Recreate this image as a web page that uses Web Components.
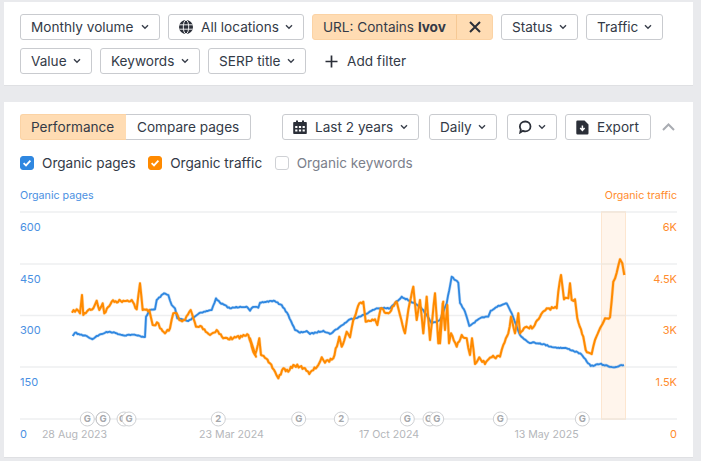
<!DOCTYPE html>
<html>
<head>
<meta charset="utf-8">
<style>
  html, body { margin: 0; padding: 0; background: #e9eaed; }
  body { font-family: Inter, "Liberation Sans", sans-serif; font-size: 13.6px; color: #333a47; width: 701px; height: 461px; overflow: hidden; }
  main { display: flex; flex-direction: column; gap: 16px; padding: 2px 8px 0 4px; }
  .row { display: flex; gap: 8px; align-items: center; }
  .tools { display: flex; align-items: center; }
  .checks { display: flex; gap: 12.5px; margin-top: 16px; }
  svg { display: block; }
</style>
</head>
<body>
<main>
  <panel-card>
    <div class="row" style="margin-bottom:8px">
      <ui-button caret style="width:140px">Monthly volume</ui-button>
      <ui-button caret style="width:136px"><svg slot="icon" width="14" height="14" viewBox="0 0 14 14"><circle cx="7" cy="7" r="7" fill="#2b2f38"/><g fill="none" stroke="#fff" stroke-width=".9"><ellipse cx="7" cy="7" rx="2.700" ry="6.800"/><path d="M.4 4.800h13.200M.4 9.200h13.200"/></g></svg>All locations</ui-button>
      <active-filter>URL: Contains <b>lvov</b></active-filter>
      <ui-button caret style="width:77px">Status</ui-button>
      <ui-button caret style="width:77px">Traffic</ui-button>
    </div>
    <div class="row">
      <ui-button caret style="width:72px">Value</ui-button>
      <ui-button caret style="width:100px">Keywords</ui-button>
      <ui-button caret style="width:98px">SERP title</ui-button>
      <ui-button plain><svg slot="icon" width="13" height="13" viewBox="0 0 13 13" stroke="#2b2f38" stroke-width="1.7"><path d="M6.500 0.500v12M0.500 6.500h12"/></svg>Add filter</ui-button>
    </div>
  </panel-card>

  <panel-card>
    <div class="tools">
      <ui-button segment="on">Performance</ui-button>
      <ui-button segment="off">Compare pages</ui-button>
      <span style="flex:0 0 31px"></span>
      <ui-button caret style="width:137px"><svg slot="icon" width="14" height="14" viewBox="0 0 14 14"><path fill="#2b2f38" d="M1 2h2V0.600h2V2h4V0.600h2V2h2a.8.8 0 0 1 .8.8v10.400a.8.8 0 0 1-.8.8H1a.8.8 0 0 1-.8-.8V2.800A.8.8 0 0 1 1 2z"/><path fill="#fff" d="M2.200 6h2.200v2H2.200zM5.900 6h2.200v2H5.900zM9.600 6h2.200v2H9.600zM2.200 9.400h2.200v2H2.200zM5.900 9.400h2.200v2H5.900zM9.600 9.400h2.200v2H9.600z"/></svg>Last 2 years</ui-button>
      <span style="flex:0 0 10px"></span>
      <ui-button caret style="width:68px">Daily</ui-button>
      <span style="flex:0 0 10px"></span>
      <ui-button caret style="width:50px"><svg slot="icon" width="14" height="14" viewBox="0 0 15 15" fill="none" stroke="#2b2f38" stroke-width="1.900"><path d="M7.800 1.600c3.200 0 5.600 2.300 5.600 5.300s-2.400 5.200-5.600 5.200c-1.100 0-1.800-.2-2.500-.5L2.400 13.400l.6-3.300C2.400 9.200 2 8.100 2 6.900c0-3 2.600-5.300 5.800-5.300z"/></svg></ui-button>
      <span style="flex:0 0 8px"></span>
      <ui-button style="width:86px"><svg slot="icon" width="13" height="15" viewBox="0 0 13 15"><path fill="#2b2f38" d="M1.500 0.500H8.500L12.500 4.500V13.300A1.200 1.200 0 0 1 11.300 14.500H1.500A1.200 1.200 0 0 1 .3 13.300V1.700A1.200 1.200 0 0 1 1.500 0.500z"/><path fill="none" stroke="#fff" stroke-width="1.500" d="M6.400 5.500V10M4.200 8 6.400 10.300 8.600 8"/></svg>Export</ui-button>
      <svg style="margin-left:11px" width="13" height="8" viewBox="0 0 13 8" fill="none" stroke="#a9acb2" stroke-width="2"><path d="M1 7 6.500 1.500 12 7"/></svg>
    </div>
    <div class="checks">
      <check-row color="#2f87e0" checked>Organic pages</check-row>
      <check-row color="#ff8a00" checked>Organic traffic</check-row>
      <check-row muted>Organic keywords</check-row>
    </div>
    <traffic-chart></traffic-chart>
  </panel-card>
</main>

<script>
class PanelCard extends HTMLElement {
  constructor() {
    super();
    this.attachShadow({ mode: "open" });
    this.shadowRoot.innerHTML = `
      <style>
        :host { display: block; background: #fff; border-bottom: 1px solid #dfe0e3; padding: 12px 16px 11px; box-sizing: border-box; }
      </style>
      <slot></slot>`;
  }
}

class UiButton extends HTMLElement {
  constructor() {
    super();
    this.attachShadow({ mode: "open" });
    this.shadowRoot.innerHTML = `
      <style>
        :host { display: inline-flex; align-items: center; justify-content: space-between; height: 26px; box-sizing: border-box; padding: 0 10px; gap: 5px;
                border: 1px solid #c9cbcf; border-radius: 3px; background: #fff; white-space: nowrap; line-height: 24px; flex: none; }
        :host([plain]) { border-color: transparent; }
        :host([plain]) .in { gap: 9px; }
        :host([segment="on"]) { background: #ffdcb3; border-color: #fbd3a5; border-radius: 3px 0 0 3px; border-right: 0; width: 106px; }
        :host([segment="off"]) { border-radius: 0 3px 3px 0; border-left: 0; width: 125px; padding-left: 11px; }
        .in { display: inline-flex; align-items: center; gap: 8px; }
        .caret { display: none; }
        :host([caret]) .caret { display: block; }
      </style>
      <span class="in"><slot name="icon"></slot><slot></slot></span>
      <svg class="caret" width="8" height="6" viewBox="0 0 8 6" fill="none" stroke="#3a404c" stroke-width="1.400"><path d="M1 1.200 4 4.200 7 1.200"/></svg>`;
  }
}

class ActiveFilter extends HTMLElement {
  constructor() {
    super();
    this.attachShadow({ mode: "open" });
    this.shadowRoot.innerHTML = `
      <style>
        :host { display: inline-flex; align-items: stretch; height: 26px; width: 181px; box-sizing: border-box; flex: none;
                background: #ffdcb3; border: 1px solid #fbd3a5; border-radius: 3px; white-space: nowrap; line-height: 24px; }
        .t { flex: 1; padding-left: 10px; }
        .x { flex: 0 0 35px; border-left: 1px solid #f6c995; display: flex; align-items: center; justify-content: center; }
        ::slotted(b) { font-weight: 700; }
      </style>
      <span class="t"><slot></slot></span>
      <span class="x"><svg width="12" height="12" viewBox="0 0 12 12" stroke="#2b2f38" stroke-width="2" fill="none"><path d="M1 1 11 11M11 1 1 11"/></svg></span>`;
  }
}

class CheckRow extends HTMLElement {
  constructor() {
    super();
    this.attachShadow({ mode: "open" });
    const c = this.getAttribute("color") || "#fff";
    const on = this.hasAttribute("checked");
    this.shadowRoot.innerHTML = `
      <style>
        :host { display: inline-flex; align-items: center; gap: 8px; height: 14px; line-height: 14px; white-space: nowrap; }
        :host([muted]) { color: #7b808b; }
        .box { width: 14px; height: 14px; box-sizing: border-box; border-radius: 3px; background: ${c}; display: block; border: 1px solid ${on ? c : "#cfd1d5"}; }
      </style>
      <svg class="box" viewBox="0 0 12 12" fill="none" stroke="#fff" stroke-width="1.800">${on ? '<path d="M2.600 6.200 5 8.400 9.400 3.600"/>' : ""}</svg>
      <span><slot></slot></span>`;
  }
}

// points read off the reference, x/y in page pixels
const BLUE = [[72.7,336],[75,332.7],[80,334.7],[86.7,336],[92.3,339.3],[96.7,336],[105,332.7],[110,331.7],[116.7,333.3],[123.3,335.3],[131.7,334.7],[140,336],[145,337],[146,316.7],[150,310],[155,309.3],[156.7,300],[164,293.3],[168.3,295],[171.7,305],[175,308.3],[177.3,318.3],[188.3,321],[200,312.7],[211.7,310],[216,298.3],[220,302.7],[230,308.3],[240,306.7],[246.7,306.7],[250,310.7],[253,307],[258.3,307.7],[260,302.7],[273.3,300.7],[281.7,305],[288.3,315],[295,330],[300,332.7],[306.7,331],[310,334],[323.3,330.7],[330,334],[340,326.7],[350,319.3],[360,316.7],[376.7,308.3],[390,308.3],[401.7,296.7],[413.3,302.7],[423.3,310],[431.7,323.3],[440,320],[446.7,303.3],[451.7,276.7],[458.3,282.7],[460,303],[465,311.7],[469.3,326],[480,318.3],[488.3,316.7],[490.7,310.7],[498.3,305.7],[506.7,303.3],[511.7,313.3],[520,335],[528.3,342.3],[540,343.3],[553.3,347.3],[566.7,348.3],[580,353.3],[590.7,366],[600,364],[613.3,367.3],[624,365]];

const zoomed = (ox, oy, pts) => pts.map(([x, y]) => [ox + x / 3, oy + y / 3]);
const ORANGE = [
  ...zoomed(60, 260, [[36,158],[50,148],[60,160],[66,105],[70,165],[85,150],[100,145],[110,122],[118,150],[128,130],[133,160],[155,125],[190,122],[215,120],[230,148],[240,70],[248,150],[268,150],[278,195],[295,190],[300,205],[315,220],[330,205],[340,160],[350,160],[358,180],[375,180],[392,150],[408,200],[425,200],[450,225],[470,210],[490,235],[520,235],[565,225],[578,260],[588,290]]),
  ...zoomed(250, 260, [[0,235],[5,260],[15,285],[28,235],[33,285],[60,310],[75,335],[85,355],[100,325],[115,335],[130,315],[150,320],[165,325],[178,342],[205,315],[215,292],[225,308],[250,295],[268,230],[275,260],[290,215],[300,232],[310,180],[328,130],[340,125],[347,185],[375,178],[382,195],[392,145],[415,160],[440,125],[450,165],[465,220],[475,150],[490,80],[500,180],[510,120],[520,220],[530,110],[540,240],[555,100],[565,250],[580,125]]),
  ...zoomed(440, 240, [[0,310],[8,190],[15,270],[22,195],[27,310],[33,280],[50,320],[65,285],[80,295],[90,345],[96,295],[105,372],[118,352],[135,372],[155,352],[180,350],[190,315],[205,280],[213,230],[225,280],[235,220],[240,280],[260,260],[280,262],[300,230],[320,205],[350,205],[355,155],[363,105],[372,178],[385,175],[390,130],[395,180],[405,178],[412,235],[430,290],[437,330],[455,342],[465,300],[480,265],[495,235],[510,232],[520,125],[530,98],[540,58],[547,70],[553,105]])
];

// small wobble so the series looks like daily data
function wobble(pts, amp) {
  let seed = 7;
  const rnd = () => (seed = (seed * 16807) % 2147483647) / 2147483647 - 0.5;
  const out = [];
  pts.forEach(([x, y], i) => {
    out.push([x, y]);
    const next = pts[i + 1];
    if (!next || next[0] - x < 2) return;
    const n = Math.floor((next[0] - x) / 1.2);
    for (let k = 1; k < n; k++) {
      const t = k / n;
      out.push([x + (next[0] - x) * t, y + (next[1] - y) * t + rnd() * amp]);
    }
  });
  return out.map(p => p[0].toFixed(1) + "," + p[1].toFixed(1)).join(" ");
}

// top of the chart element sits at page y 184
const Y0 = 184;
class TrafficChart extends HTMLElement {
  constructor() {
    super();
    this.attachShadow({ mode: "open" });
    const grid = [212, 264, 315.5, 367, 419];
    const left = [["600", 227], ["450", 279], ["300", 330], ["150", 382], ["0", 434]];
    const right = [["6K", 227], ["4.5K", 279], ["3K", 330], ["1.5K", 382], ["0", 434]];
    const dates = [["28 Aug 2023", 74.5], ["23 Mar 2024", 231.5], ["17 Oct 2024", 389], ["13 May 2025", 546.5]];
    // ring, label, darker ring, label x when the next ring covers it
    const marks = [[87.3,"G",0],[103,"G",1],[124,"G",0,122.5],[129,"G",0],[218.3,"2",0],[298.7,"G",0],[341.3,"2",0],[407.3,"G",0],[430,"G",0,428.5],[436.7,"G",0],[500.3,"G",0],[582.3,"G",0]];
    const blue = wobble(BLUE, 1.2);
    const orange = wobble(ORANGE, 3);
    this.shadowRoot.innerHTML = `
      <style>
        :host { display: block; margin: 14px -16px 0 -20px; height: 262px; }
        svg { display: block; font-family: Inter, "Liberation Sans", sans-serif; }
        .t { font-size: 10.7px; }
        .tick { font-size: 11px; }
        .blue { fill: #4a90e2; }
        .orange { fill: #ff8c2e; }
        .date { font-size: 10.6px; fill: #b4b6ba; }
        .mark { font-size: 9.5px; font-weight: 700; fill: #a6a8ac; }
      </style>
      <svg width="693" height="262" viewBox="0 ${Y0} 693 262">
        <text class="t blue" x="20" y="199">Organic pages</text>
        <text class="t orange" x="677" y="199" text-anchor="end">Organic traffic</text>
        ${grid.map(y => `<line x1="20" x2="677" y1="${y}" y2="${y}" stroke="#eeeff0" stroke-width="1.5"/>`).join("")}
        <rect x="601.5" y="212" width="24" height="207" fill="#fff5ec" stroke="#fde6d0"/>
        ${grid.map(y => `<line x1="601" x2="626" y1="${y}" y2="${y}" stroke="#f1e7dd" stroke-width="1.5"/>`).join("")}
        <polyline points="${blue}" fill="none" stroke="#2f87e0" stroke-width="3" stroke-linejoin="round" opacity=".3"/>
        <polyline points="${blue}" fill="none" stroke="#2f87e0" stroke-width="1.8" stroke-linejoin="round"/>
        <polyline points="${orange}" fill="none" stroke="#ff8a00" stroke-width="3.2" stroke-linejoin="round" opacity=".3"/>
        <polyline points="${orange}" fill="none" stroke="#ff8a00" stroke-width="2" stroke-linejoin="round"/>
        ${left.map(([t, y]) => `<text class="tick blue" x="20" y="${y + 4}">${t}</text>`).join("")}
        ${right.map(([t, y]) => `<text class="tick orange" x="677" y="${y + 4}" text-anchor="end">${t}</text>`).join("")}
        ${dates.map(([t, x]) => `<text class="date" x="${x}" y="438" text-anchor="middle">${t}</text>`).join("")}
        ${marks.map(([x, t, dark, tx]) => `<circle cx="${x}" cy="419" r="7" fill="#fff" stroke="${dark ? "#b5b7bb" : "#cfd1d4"}"/><text class="mark" x="${tx || x}" y="422.3" text-anchor="middle">${t}</text>`).join("")}
      </svg>`;
  }
}

customElements.define("panel-card", PanelCard);
customElements.define("ui-button", UiButton);
customElements.define("active-filter", ActiveFilter);
customElements.define("check-row", CheckRow);
customElements.define("traffic-chart", TrafficChart);
</script>
</body>
</html>
